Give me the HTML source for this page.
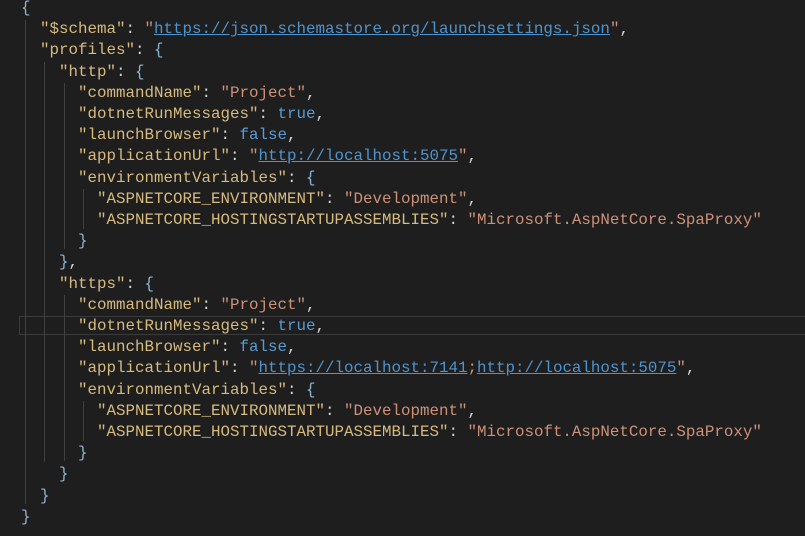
<!DOCTYPE html>
<html><head><meta charset="utf-8"><style>
html,body{margin:0;padding:0;background:#1e1e1e;width:805px;height:536px;overflow:hidden}
#ed{position:relative;width:805px;height:536px}
.l{position:absolute;left:21px;height:21.2px;line-height:21.2px;white-space:pre;font-family:"Liberation Mono",monospace;font-size:15.83px;color:#d4d4d4}
.k{color:#d7ba7d}.s{color:#ce9178}.b{color:#569cd6}.p{color:#8fb4cf}
.u{color:#4e94ce;text-decoration:underline}
.g{position:absolute;width:1px;background:#404040}
.hl{position:absolute;left:19px;top:316px;width:790px;height:19px;border:1px solid #3a3a3a;box-sizing:border-box}
</style></head><body><div id="ed">
<div class="hl"></div>
<div class="g" style="left:25px;top:20px;height:484px"></div>
<div class="g" style="left:44px;top:62px;height:400px"></div>
<div class="g" style="left:64px;top:83px;height:166px"></div>
<div class="g" style="left:64px;top:295px;height:166px"></div>
<div class="g" style="left:83px;top:189px;height:40px"></div>
<div class="g" style="left:83px;top:401px;height:40px"></div>
<div class="l" style="top:-2px"><span class="p">{</span></div>
<div class="l" style="top:19.2px">  <span class="k">"$schema"</span>: <span class="s">"</span><span class="u">https://json.schemastore.org/launchsettings.json</span><span class="s">"</span>,</div>
<div class="l" style="top:40.4px">  <span class="k">"profiles"</span>: <span class="p">{</span></div>
<div class="l" style="top:61.6px">    <span class="k">"http"</span>: <span class="p">{</span></div>
<div class="l" style="top:82.8px">      <span class="k">"commandName"</span>: <span class="s">"Project"</span>,</div>
<div class="l" style="top:104px">      <span class="k">"dotnetRunMessages"</span>: <span class="b">true</span>,</div>
<div class="l" style="top:125.2px">      <span class="k">"launchBrowser"</span>: <span class="b">false</span>,</div>
<div class="l" style="top:146.4px">      <span class="k">"applicationUrl"</span>: <span class="s">"</span><span class="u">http://localhost:5075</span><span class="s">"</span>,</div>
<div class="l" style="top:167.6px">      <span class="k">"environmentVariables"</span>: <span class="p">{</span></div>
<div class="l" style="top:188.8px">        <span class="k">"ASPNETCORE_ENVIRONMENT"</span>: <span class="s">"Development"</span>,</div>
<div class="l" style="top:210px">        <span class="k">"ASPNETCORE_HOSTINGSTARTUPASSEMBLIES"</span>: <span class="s">"Microsoft.AspNetCore.SpaProxy"</span></div>
<div class="l" style="top:231.2px">      <span class="p">}</span></div>
<div class="l" style="top:252.4px">    <span class="p">}</span>,</div>
<div class="l" style="top:273.6px">    <span class="k">"https"</span>: <span class="p">{</span></div>
<div class="l" style="top:294.8px">      <span class="k">"commandName"</span>: <span class="s">"Project"</span>,</div>
<div class="l" style="top:316px">      <span class="k">"dotnetRunMessages"</span>: <span class="b">true</span>,</div>
<div class="l" style="top:337.2px">      <span class="k">"launchBrowser"</span>: <span class="b">false</span>,</div>
<div class="l" style="top:358.4px">      <span class="k">"applicationUrl"</span>: <span class="s">"</span><span class="u">https://localhost:7141</span><span class="s">;</span><span class="u">http://localhost:5075</span><span class="s">"</span>,</div>
<div class="l" style="top:379.6px">      <span class="k">"environmentVariables"</span>: <span class="p">{</span></div>
<div class="l" style="top:400.8px">        <span class="k">"ASPNETCORE_ENVIRONMENT"</span>: <span class="s">"Development"</span>,</div>
<div class="l" style="top:422px">        <span class="k">"ASPNETCORE_HOSTINGSTARTUPASSEMBLIES"</span>: <span class="s">"Microsoft.AspNetCore.SpaProxy"</span></div>
<div class="l" style="top:443.2px">      <span class="p">}</span></div>
<div class="l" style="top:464.4px">    <span class="p">}</span></div>
<div class="l" style="top:485.6px">  <span class="p">}</span></div>
<div class="l" style="top:506.8px"><span class="p">}</span></div>
</div></body></html>
